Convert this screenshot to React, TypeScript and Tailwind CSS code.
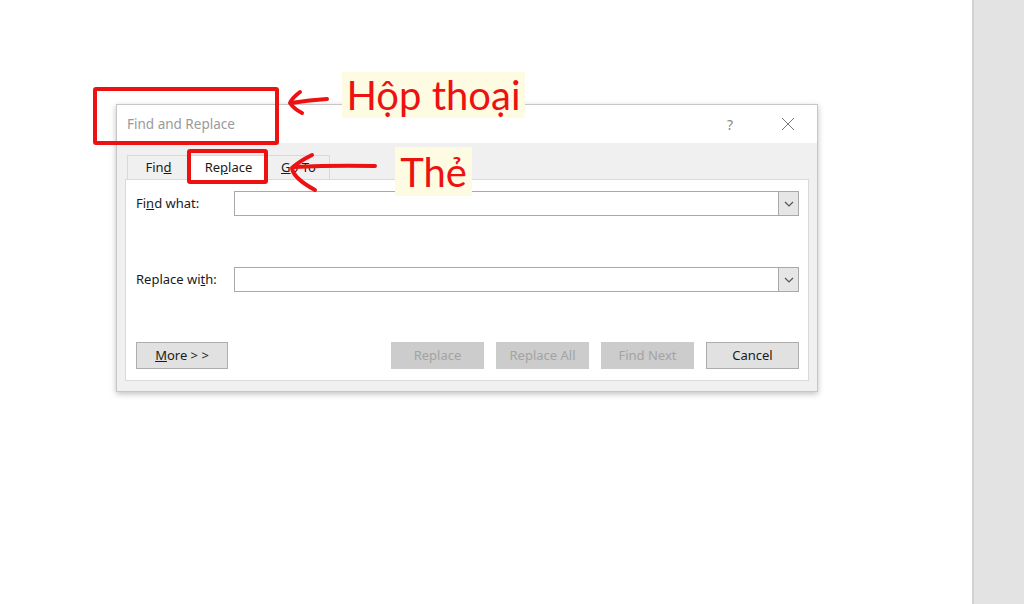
import React from "react";

const RED = "#ee1111";

function Tab({ children, active = false, width }: { children: React.ReactNode; active?: boolean; width: string }) {
  return (
    <div
      className={`${width} flex items-center justify-center border border-b-0 border-[#d9d9d9] text-[13px] text-[#1a1a1a] ${
        active ? "relative z-10 -mb-px h-[25px] bg-white" : "h-[24px] bg-[#f0f0f0]"
      }`}
    >
      {children}
    </div>
  );
}

function ComboField() {
  return (
    <div className="flex h-[25px] flex-1 border border-[#a9a9a9] bg-white">
      <div className="flex-1" />
      <div className="flex w-[20px] items-center justify-center border-l border-[#a9a9a9] bg-[#e6e6e6]">
        <svg width="10" height="6" viewBox="0 0 10 6" fill="none">
          <path d="M1 1 L5 5 L9 1" stroke="#555" strokeWidth="1.2" />
        </svg>
      </div>
    </div>
  );
}

function DialogButton({ children, disabled = false }: { children: React.ReactNode; disabled?: boolean }) {
  return (
    <div
      className={`flex h-[27px] w-[93px] items-center justify-center border text-[13px] ${
        disabled
          ? "border-[#cccccc] bg-[#cccccc] text-[#a3a3a3]"
          : "border-[#adadad] bg-[#e1e1e1] text-[#1a1a1a]"
      }`}
    >
      {children}
    </div>
  );
}

function FindReplaceDialog() {
  return (
    <div className="flex h-[288px] w-[702px] flex-col border border-[#c6c6c6] bg-[#f0f0f0] shadow-[0_2px_6px_rgba(0,0,0,0.25)]">
      <div className="flex h-[38px] items-center bg-white pl-[10px] pr-[22px]">
        <span className="flex-1 text-[13.5px] text-[#9a9a9a]">Find and Replace</span>
        <span className="mr-[48px] text-[14px] text-[#8a8a8a]">?</span>
        <svg width="14" height="14" viewBox="0 0 14 14" fill="none">
          <path d="M1 1 L13 13 M13 1 L1 13" stroke="#7a7a7a" strokeWidth="1" />
        </svg>
      </div>

      <div className="flex flex-1 flex-col px-[8px] pb-[10px] pt-[12px]">
        <div className="ml-[2px] flex h-[24px] items-end">
          <Tab width="w-[63px]">
            Fin<span className="underline">d</span>
          </Tab>
          <Tab width="w-[77px]" active>
            Re<span className="underline">p</span>lace
          </Tab>
          <Tab width="w-[63px]">
            <span className="underline">G</span>o To
          </Tab>
        </div>

        <div className="flex flex-1 flex-col border border-[#d9d9d9] bg-white pb-[11px] pl-[10px] pr-[9px] pt-[11px]">
          <div className="flex items-center">
            <span className="w-[98px] text-[13px] text-[#1a1a1a]">
              Fi<span className="underline">n</span>d what:
            </span>
            <ComboField />
          </div>
          <div className="mt-[51px] flex items-center">
            <span className="w-[98px] text-[13px] text-[#1a1a1a]">
              Replace wi<span className="underline">t</span>h:
            </span>
            <ComboField />
          </div>
          <div className="mt-auto flex items-center">
            <div className="flex h-[27px] w-[92px] items-center justify-center border border-[#adadad] bg-[#e1e1e1] text-[13px] text-[#1a1a1a]">
              <span className="underline">M</span>ore &gt; &gt;
            </div>
            <div className="ml-auto flex gap-[12px]">
              <DialogButton disabled>Replace</DialogButton>
              <DialogButton disabled>Replace All</DialogButton>
              <DialogButton disabled>Find Next</DialogButton>
              <DialogButton>Cancel</DialogButton>
            </div>
          </div>
        </div>
      </div>
    </div>
  );
}

function Annotations() {
  return (
    <div className="pointer-events-none absolute inset-0 z-20">
      <div className="absolute left-[93px] top-[87px] h-[58px] w-[186px] rounded-[3px] border-4 border-[#ee1111]" />
      <div className="absolute left-[187px] top-[149px] h-[35px] w-[81px] rounded-[3px] border-4 border-[#ee1111]" />

      <div className="absolute left-[342px] top-[72px] flex h-[46px] w-[183px] items-center justify-center bg-[#fdfbe2] font-['Lato',sans-serif] text-[40px] leading-none text-[#ee1111]">
        Hộp thoại
      </div>
      <div className="absolute left-[395px] top-[147px] flex h-[49px] w-[77px] items-center justify-center bg-[#fdfbe2] font-['Lato',sans-serif] text-[40px] leading-none text-[#ee1111]">
        Thẻ
      </div>

      <svg className="absolute left-0 top-0" width="1024" height="604" fill="none">
        <path d="M327 99 Q310 100 291 103" stroke={RED} strokeWidth="4" strokeLinecap="round" />
        <path d="M300 92 Q292 98 290 103 Q294 109 302 113" stroke={RED} strokeWidth="4" strokeLinecap="round" strokeLinejoin="round" />
        <path d="M375 166 Q335 165 294 167" stroke={RED} strokeWidth="4" strokeLinecap="round" />
        <path d="M312 155 Q298 162 292 168 Q293 178 315 190" stroke={RED} strokeWidth="4" strokeLinecap="round" strokeLinejoin="round" />
      </svg>
    </div>
  );
}

export default function App() {
  return (
    <div className="relative flex h-[604px] w-[1024px] overflow-hidden bg-white font-['Noto_Sans',sans-serif]">
      <div className="flex-1 pl-[116px] pt-[104px]">
        <FindReplaceDialog />
      </div>
      <div className="w-[52px] border-l-[2px] border-[#d2d2d2] bg-[#e3e3e3]" />
      <Annotations />
    </div>
  );
}
